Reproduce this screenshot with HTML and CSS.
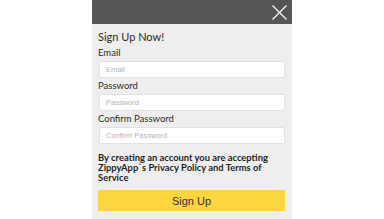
FILE: index.html
```html
<!DOCTYPE html>
<html lang="en">
<head>
    <meta charset="UTF-8">
    <meta name="viewport" content="width=device-width, initial-scale=1.0">
    <title>ZippyApp - Sign Up</title>
    <link rel="stylesheet" href="styles.css">
</head>
<body>
    <div class="registro">
        <div class="registro-cabecera">
            <button class="boton-cerrar" aria-label="Close">
                <svg width="15" height="15" viewBox="0 0 15 15">
                    <path d="M0.5 0.5 L14.5 14.5 M14.5 0.5 L0.5 14.5" stroke="#fff" stroke-width="1.2" fill="none"/>
                </svg>
            </button>
        </div>
        <form class="registro-cuerpo">
            <h2>Sign Up Now!</h2>
            <label>Email</label>
            <input type="email" placeholder="Email">
            <label>Password</label>
            <input type="password" placeholder="Password">
            <label>Confirm Password</label>
            <input type="password" placeholder="Confirm Password">
            <p class="aviso">By creating an account you are accepting ZippyApp`s Privacy Policy and Terms of Service</p>
            <button type="submit" class="boton-registro">Sign Up</button>
        </form>
    </div>
</body>
</html>
```

FILE: styles.css
```css
body {
    margin: 0;
    background: #fff;
    font-family: Lato, "Open Sans", sans-serif;
    color: #222;
}

.registro {
    width: 200px;
    min-height: 219px;
    margin: 0 auto;
    background: #eeeeee;
}

.registro-cabecera {
    height: 24px;
    background: #555555;
    display: flex;
    justify-content: flex-end;
    align-items: center;
    padding-right: 5px;
}

.boton-cerrar {
    border: 0;
    padding: 0;
    background: none;
    width: 15px;
    height: 15px;
    display: block;
}

.boton-cerrar svg {
    display: block;
}

.registro-cuerpo {
    display: flex;
    flex-direction: column;
    padding: 0 7px 0 6px;
}

.registro-cuerpo h2 {
    margin: 6px 0 0;
    font-size: 11px;
    line-height: 14px;
    font-weight: normal;
    color: #2a2a2a;
}

.registro-cuerpo label {
    margin-top: 3px;
    font-size: 9.5px;
    line-height: 11px;
    color: #2a2a2a;
}

.registro-cuerpo label + input {
    margin-top: 3px;
}

.registro-cuerpo input + label {
    margin-top: 2px;
}

input {
    height: 17px;
    box-sizing: border-box;
    margin-left: 1px;
    padding: 0 6px;
    background: #fff;
    border: 1px solid #e2e2e2;
    border-radius: 2px;
    font-family: "Liberation Sans", Arial, sans-serif;
    font-size: 7.5px;
    outline: none;
}

input::placeholder {
    color: #b3b3b3;
}

.aviso {
    margin: 9px 0 0;
    font-size: 9.4px;
    line-height: 10px;
    font-weight: bold;
    color: #1e1e1e;
}

.boton-registro {
    margin-top: 7px;
    height: 21px;
    border: 0;
    border-radius: 1px;
    background: #fcd53f;
    color: #333;
    font-family: "Liberation Sans", Arial, sans-serif;
    font-size: 11px;
}
```
